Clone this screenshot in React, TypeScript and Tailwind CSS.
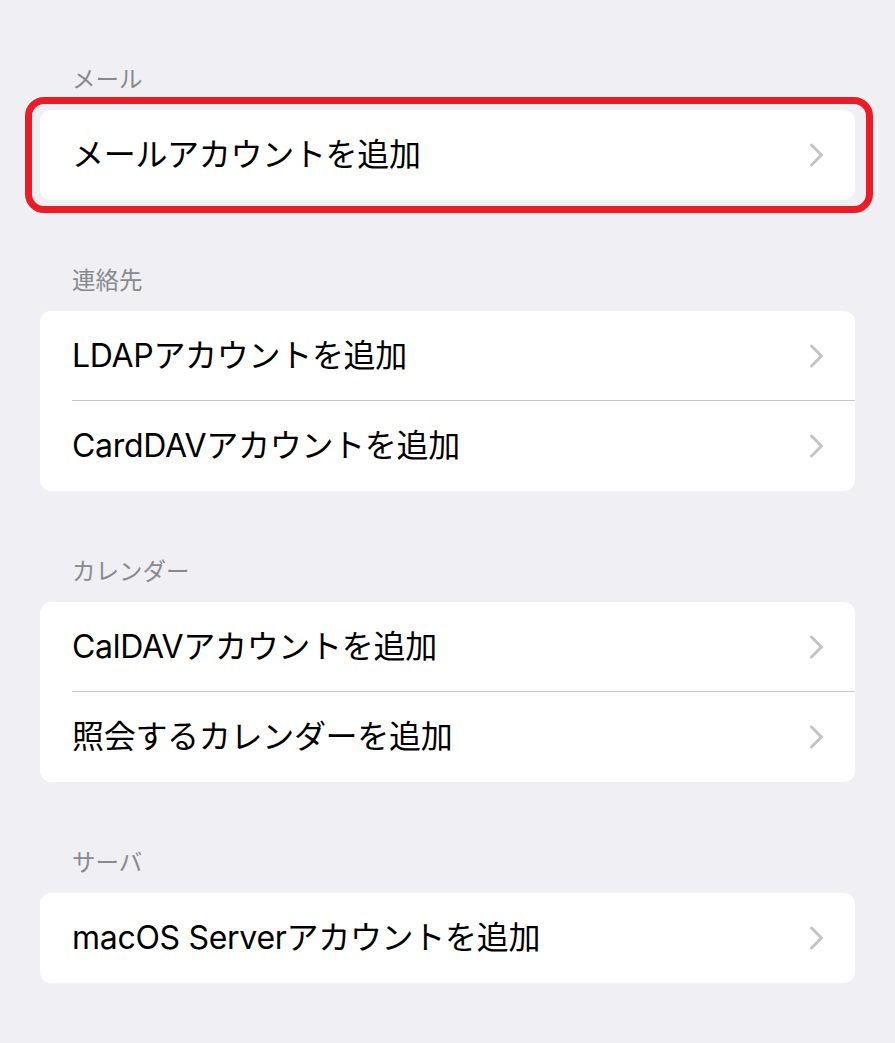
import * as React from "react";

type Section = {
  title: string;
  items: string[];
  highlighted?: boolean;
};

const sections: Section[] = [
  { title: "メール", items: ["メールアカウントを追加"], highlighted: true },
  { title: "連絡先", items: ["LDAPアカウントを追加", "CardDAVアカウントを追加"] },
  { title: "カレンダー", items: ["CalDAVアカウントを追加", "照会するカレンダーを追加"] },
  { title: "サーバ", items: ["macOS Serverアカウントを追加"] },
];

const Chevron = () => (
  <svg width="15" height="24" viewBox="0 0 15 24" className="shrink-0">
    <path
      d="M2.5 2 L12.5 12 L2.5 22"
      fill="none"
      stroke="#c4c4c7"
      strokeWidth="3"
      strokeLinecap="round"
      strokeLinejoin="round"
    />
  </svg>
);

const Row = ({ label, last }: { label: string; last: boolean }) => (
  <div className="flex h-[90px] items-stretch pl-[32px]">
    <div
      className={`flex flex-1 items-center justify-between pr-[31px] ${
        last ? "" : "border-b border-[#c8c7cc]"
      }`}
    >
      <span className="text-[32px] leading-none tracking-[-0.3px] text-black">{label}</span>
      <Chevron />
    </div>
  </div>
);

const App = () => {
  return (
    <div
      className="min-h-[1043px] w-full bg-[#efeff4] px-[40px] pt-[66px] pb-[40px]"
      style={{ fontFamily: 'Inter, "Noto Sans CJK JP", sans-serif' }}
    >
      <div className="flex flex-col gap-[67px]">
        {sections.map((section) => (
          <div key={section.title}>
            <div className="h-[28px] pl-[32px] text-[23.5px] leading-[28px] text-[#8a8a8e]">
              {section.title}
            </div>
            <div className="relative mt-[16px]">
              <div className="overflow-hidden rounded-[11px] bg-white">
                {section.items.map((item, i) => (
                  <Row key={item} label={item} last={i === section.items.length - 1} />
                ))}
              </div>
              {section.highlighted && (
                <div className="pointer-events-none absolute -top-[13px] -bottom-[13px] -left-[15px] -right-[18px] rounded-[19px] border-[7px] border-[#ec1c27]" />
              )}
            </div>
          </div>
        ))}
      </div>
    </div>
  );
};

export default App;
